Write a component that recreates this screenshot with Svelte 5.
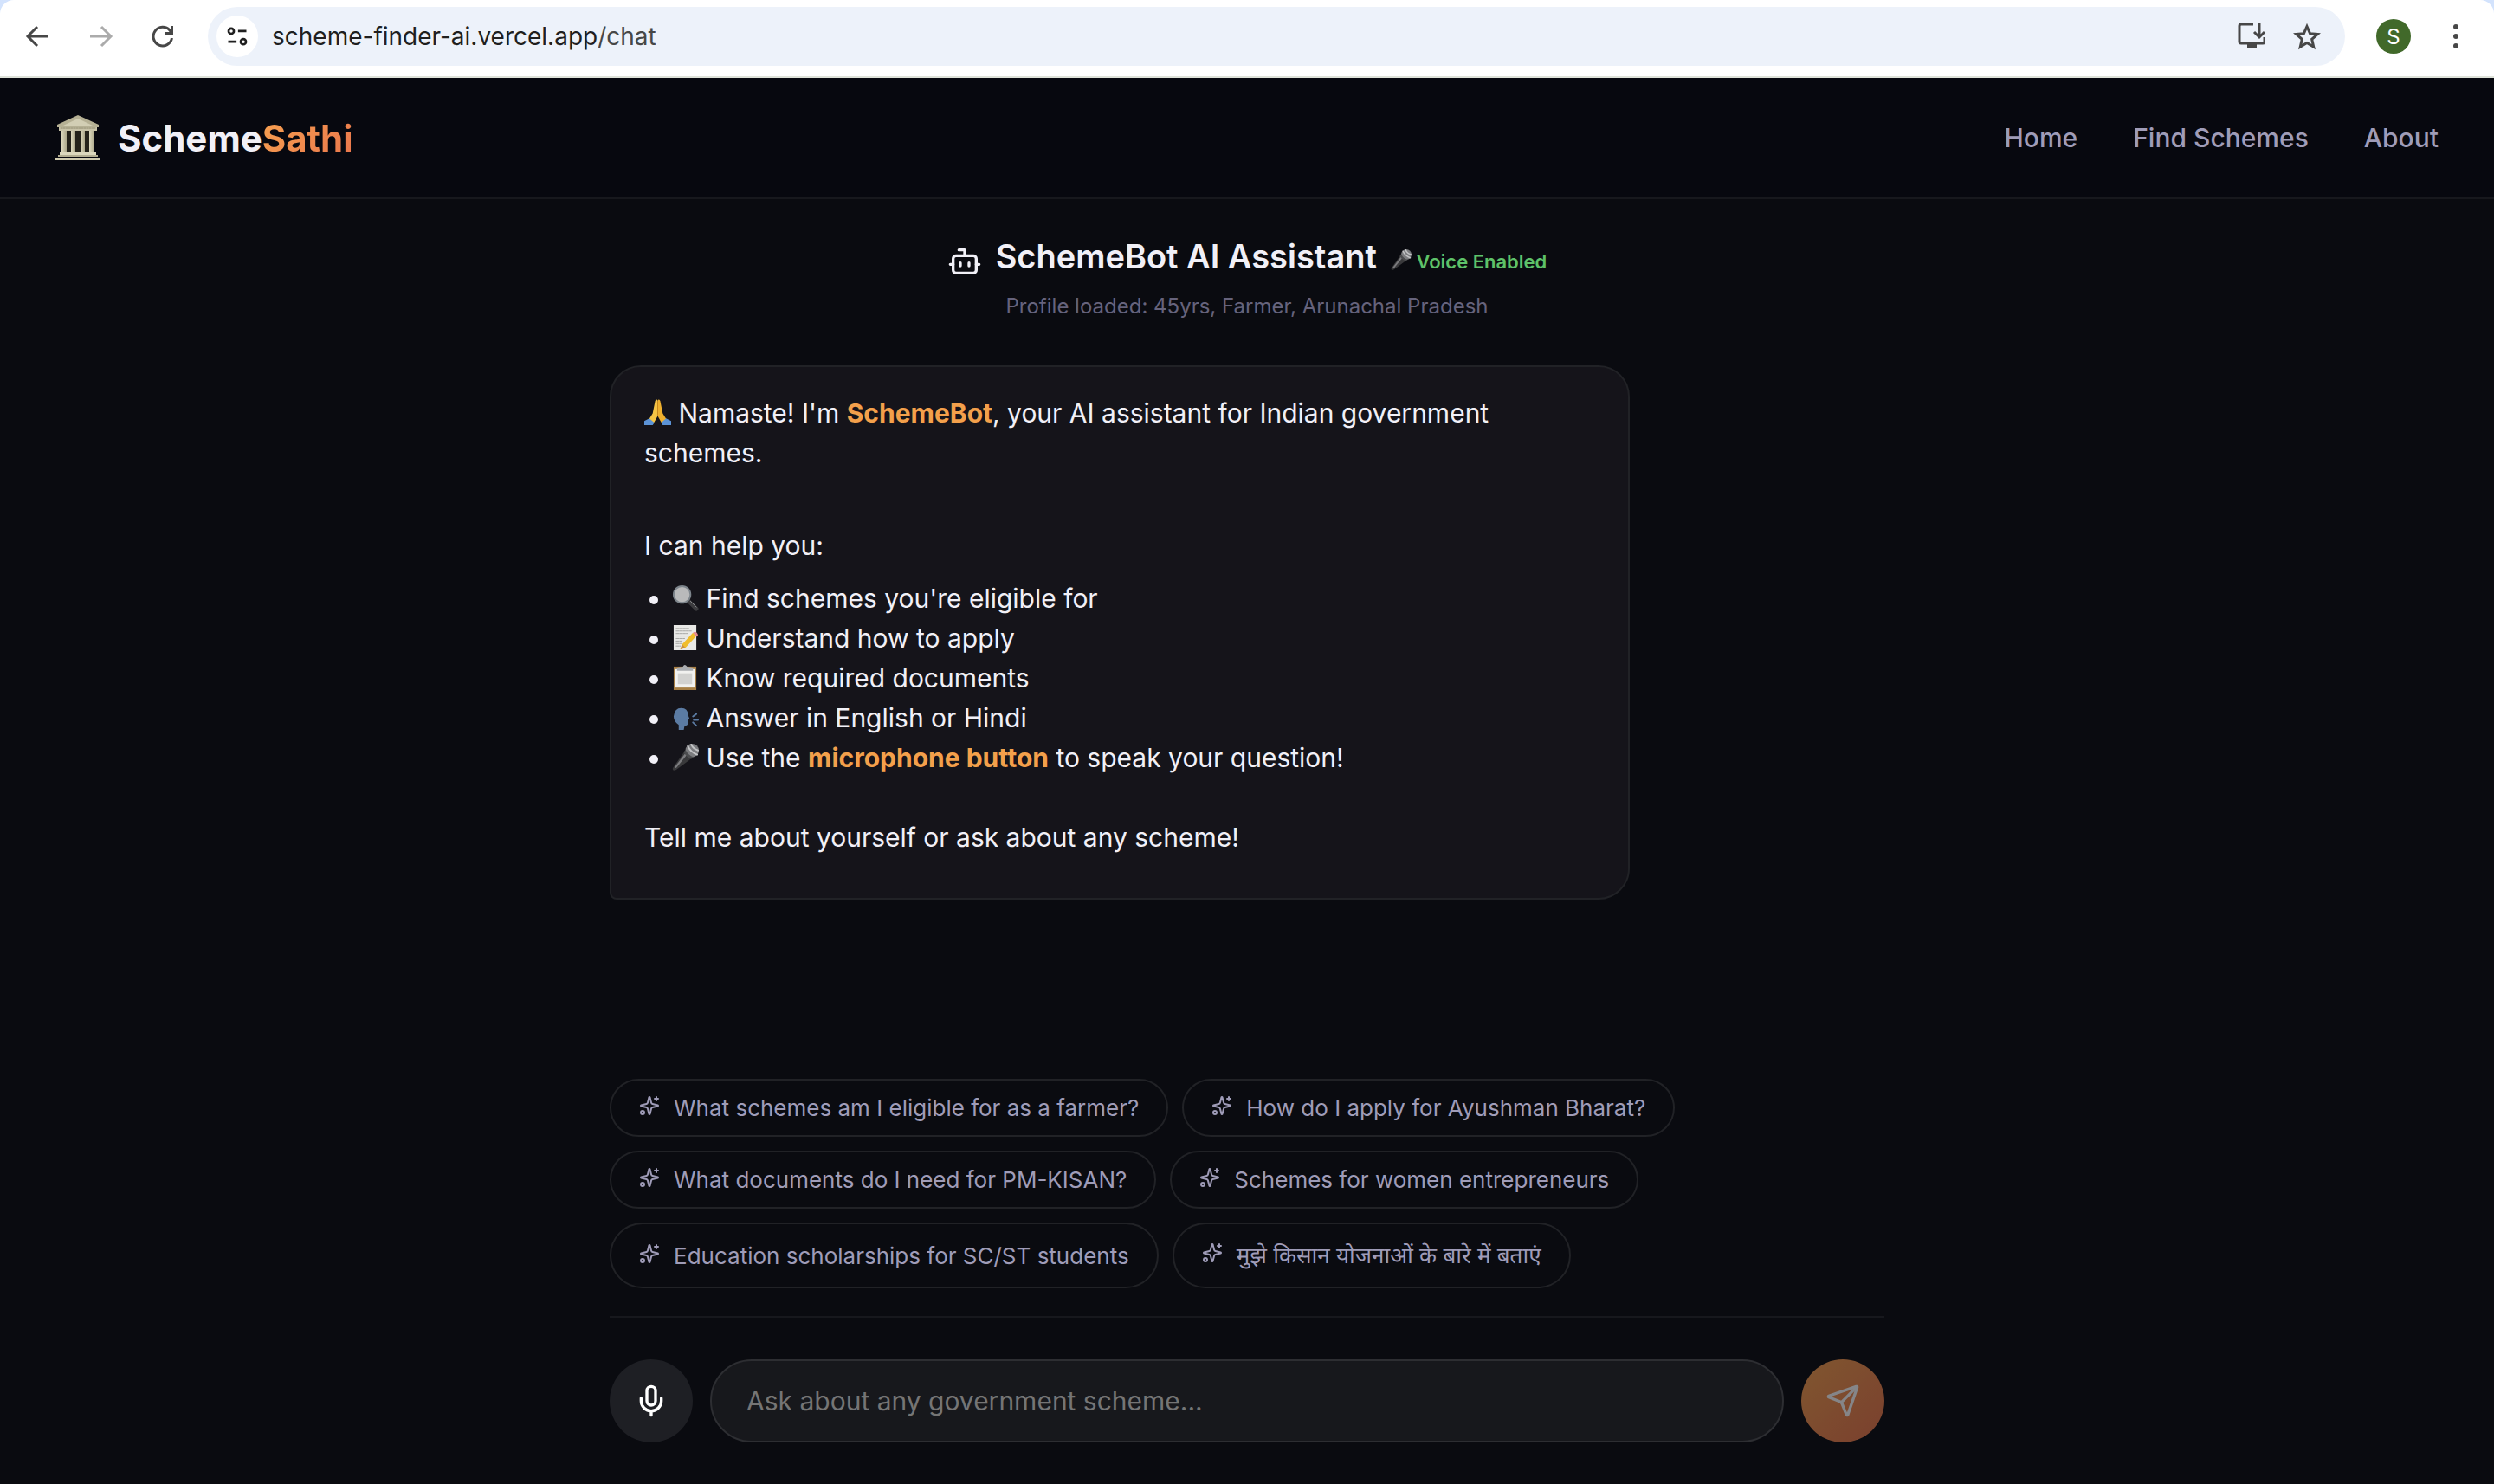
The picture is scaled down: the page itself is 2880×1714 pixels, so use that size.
<script>
    let question = '';

    const links = ['Home', 'Find Schemes', 'About'];

    const suggestions = [
        { text: 'What schemes am I eligible for as a farmer?' },
        { text: 'How do I apply for Ayushman Bharat?' },
        { text: 'What documents do I need for PM-KISAN?' },
        { text: 'Schemes for women entrepreneurs' },
        { text: 'Education scholarships for SC/ST students' },
        { text: 'मुझे किसान योजनाओं के बारे में बताएं', lang: 'hi' }
    ];

    function handleSubmit() {
        question = '';
    }
</script>

{#snippet microphone()}
    <svg class="emoji" viewBox="0 0 32 32" aria-hidden="true">
        <path d="M1 29 L15 9 L24 17 L5 31 Q0 33 1 29Z" fill="#39393b" />
        <path d="M3 28 L16 11 L18 13 L5 29Z" fill="#7c7c7f" />
        <circle cx="24" cy="8" r="8" fill="#7b7c7f" />
        <path d="M16 7 Q19 14 26 16 L23 18 Q17 16 14 10Z" fill="#4b4c4e" />
        <path d="M19 3 Q22 10 30 13 M23 1 Q25 6 31 8" stroke="#c3c4c6" stroke-width="2" />
    </svg>
{/snippet}

<div class="browser">
    <div class="chrome">
        <div class="toolbar">
            <div class="history">
                <button class="tool" aria-label="Back">
                    <svg viewBox="0 0 32 32"><path d="M28 16H5M15 5L4 16l11 11" /></svg>
                </button>
                <button class="tool dim" aria-label="Forward">
                    <svg viewBox="0 0 32 32"><path d="M4 16h23M17 5l11 11-11 11" /></svg>
                </button>
                <button class="tool" aria-label="Reload">
                    <svg viewBox="0 0 32 32"><path d="M26.500 18A10.800 10.800 0 1 1 24 9l2 3M26.500 4v8.500h-8.500" /></svg>
                </button>
            </div>
            <div class="omnibox">
                <div class="address">
                    <button class="site" aria-label="Site settings">
                        <svg viewBox="0 0 32 32"><circle cx="8" cy="9" r="3.500" /><path d="M17 9h11M4 23h11" /><circle cx="24" cy="23" r="3.500" /></svg>
                    </button>
                    <span class="url">scheme-finder-ai.vercel.app<span class="path">/chat</span></span>
                </div>
                <button class="tool" aria-label="Install app">
                    <svg viewBox="0 0 32 32"><path d="M18 2H4q-2 0-2 2v18q0 2 2 2h25q2 0 2-2v-5" /><path d="M25 1v15M19 11l6 6 6-6" /><path d="M11 25h11v5H11z" class="solid" /></svg>
                </button>
                <button class="tool" aria-label="Bookmark">
                    <svg viewBox="0 0 32 32"><path d="M16 4.500l3.500 8.200 8.900.8-6.700 5.900 2 8.700-7.700-4.600-7.700 4.600 2-8.700-6.700-5.900 8.900-.8z" /></svg>
                </button>
            </div>
            <button class="avatar">S</button>
            <button class="tool" aria-label="Menu">
                <svg viewBox="0 0 32 32" class="solid"><circle cx="16" cy="5" r="3" /><circle cx="16" cy="16" r="3" /><circle cx="16" cy="27" r="3" /></svg>
            </button>
        </div>
    </div>

    <nav>
        <a class="brand" href="/">
            <svg class="temple" viewBox="0 0 52 52" aria-hidden="true">
                <defs>
                    <linearGradient id="stone" x1="0" y1="0" x2="1" y2="0">
                        <stop offset="0" stop-color="#dedabf" />
                        <stop offset="1" stop-color="#aaa588" />
                    </linearGradient>
                </defs>
                <path d="M8 18h36v26H8z" fill="#24221a" />
                <path d="M26 0l24 11v3H2v-3z" fill="#b5b094" />
                <path d="M26 4l17 8H9z" fill="#d2ceb4" />
                <path d="M4 14h44v4H4z" fill="#c8c3a8" />
                <path d="M6 15h40" stroke="#8d886c" stroke-width="1" stroke-dasharray="2 1" />
                <g fill="url(#stone)">
                    <path d="M7 18h6v26H7z" />
                    <path d="M18 18h5v26h-5z" />
                    <path d="M29 18h5v26h-5z" />
                    <path d="M39 18h6v26h-6z" />
                </g>
                <path d="M5 43h42v3H5z" fill="#dbd7bd" />
                <path d="M3 46h46v2H3z" fill="#b3ae92" />
                <path d="M0 49h52v3H0z" fill="#cfcaae" />
            </svg>
            <span>Scheme<span class="accent">Sathi</span></span>
        </a>
        <div class="links">
            {#each links as link}
                <a href="/{link.toLowerCase().replace(' ', '-')}">{link}</a>
            {/each}
        </div>
    </nav>

    <main>
        <header>
            <h1>
                <svg class="bot" viewBox="0 0 24 24"><path d="M12 8V4H8" /><rect width="16" height="12" x="4" y="8" rx="2" /><path d="M2 14h2M20 14h2M15 13v2M9 13v2" /></svg>
                <span>SchemeBot AI Assistant</span>
                <span class="voice">{@render microphone()} Voice Enabled</span>
            </h1>
            <p>Profile loaded: 45yrs, Farmer, Arunachal Pradesh</p>
        </header>

        <div class="messages">
            <div class="bubble">
                <p>
                    <svg class="emoji" viewBox="0 0 32 32" aria-hidden="true">
                        <path d="M13 2q2-3 3 0v18l-5 9-6-4 5-8z" fill="#f5c445" />
                        <path d="M19 2q-2-3-3 0v18l5 9 6-4-5-8z" fill="#eeb02f" />
                        <path d="M16 3v17" stroke="#c98a1d" stroke-width="1" />
                        <path d="M0 26l6-3 6 5-2 3H0zM32 26l-6-3-6 5 2 3h10z" fill="#5c93d6" />
                    </svg>
                    Namaste! I'm <strong>SchemeBot</strong>, your AI assistant for Indian government schemes.
                </p>
                <br />
                <p>I can help you:</p>
                <ul>
                    <li>
                        <svg class="emoji" viewBox="0 0 32 32" aria-hidden="true">
                            <path d="M20 20l9 9" stroke="#3c3c3f" stroke-width="5" stroke-linecap="round" />
                            <path d="M22 20l7 7" stroke="#8a8b8d" stroke-width="1" />
                            <circle cx="12" cy="12" r="10" fill="#b9babb" stroke="#7d858c" stroke-width="2" />
                        </svg>
                        Find schemes you're eligible for
                    </li>
                    <li>
                        <svg class="emoji" viewBox="0 0 32 32" aria-hidden="true">
                            <path d="M2 1h27v30H2z" fill="#e9e9e7" />
                            <path d="M5 5h15M5 8h18M5 11h14M5 14h17M5 17h10M5 20h8M5 23h6M5 26h5" stroke="#a5a5a3" stroke-width="1" stroke-dasharray="3 1" />
                            <path d="M12 24L25 10l4 4-13 14-6 2z" fill="#f0bd2c" />
                            <path d="M12 24l4 4-6 2z" fill="#c98e46" />
                            <path d="M25 10l2-1q3 0 4 4l-2 2z" fill="#e58a92" />
                        </svg>
                        Understand how to apply
                    </li>
                    <li>
                        <svg class="emoji" viewBox="0 0 32 32" aria-hidden="true">
                            <path d="M2 3h27v28H2z" fill="#a77f45" />
                            <path d="M4 6h23v22H4z" fill="#f1f1ef" />
                            <path d="M7 11h17v13H7z" fill="#d2d2d0" />
                            <path d="M6 4l7-1q2-4 5 0l7 1v4H6z" fill="#a9acb0" />
                        </svg>
                        Know required documents
                    </li>
                    <li>
                        <svg class="emoji" viewBox="0 0 32 32" aria-hidden="true">
                            <path d="M8 31v-6Q2 21 2 15 3 5 11 5q8 0 8 8l2 5-2 1v4q0 3-4 3l-1 5z" fill="#5b7ba3" />
                            <path d="M25 15l4-3M26 19h5M25 22l4 4" stroke="#5b7ba3" stroke-width="2" stroke-linecap="round" />
                        </svg>
                        Answer in English or Hindi
                    </li>
                    <li>{@render microphone()} Use the <strong>microphone button</strong> to speak your question!</li>
                </ul>
                <br />
                <p>Tell me about yourself or ask about any scheme!</p>
            </div>
        </div>

        <div class="suggestions">
            {#each suggestions as suggestion}
                <button lang={suggestion.lang ?? 'en'} on:click={() => (question = suggestion.text)}>
                    <svg viewBox="0 0 24 24"><path d="M9.937 15.500A2 2 0 0 0 8.500 14.063l-6.135-1.582a.5.5 0 0 1 0-.962L8.500 9.936A2 2 0 0 0 9.937 8.500l1.582-6.135a.5.5 0 0 1 .963 0L14.063 8.500A2 2 0 0 0 15.500 9.937l6.135 1.581a.5.5 0 0 1 0 .964L15.500 14.063a2 2 0 0 0-1.437 1.437l-1.582 6.135a.5.5 0 0 1-.963 0z" /><path d="M20 2v4M22 4h-4" /><circle cx="4" cy="20" r="2" /></svg>{suggestion.text}
                </button>
            {/each}
        </div>

        <form on:submit|preventDefault={handleSubmit}>
            <button class="round mic" type="button" aria-label="Speak">
                <svg viewBox="0 0 24 24"><path d="M12 19v3M19 10v2a7 7 0 0 1-14 0v-2" /><rect x="9" y="2" width="6" height="13" rx="3" /></svg>
            </button>
            <input type="text" bind:value={question} placeholder="Ask about any government scheme..." aria-label="Question" />
            <button class="round send" type="submit" aria-label="Send" disabled={!question}>
                <svg viewBox="0 0 24 24"><path d="M14.536 21.686a.5.5 0 0 0 .937-.024l6.500-19a.496.496 0 0 0-.635-.635l-19 6.500a.5.5 0 0 0-.024.937l7.930 3.180a2 2 0 0 1 1.112 1.110z" /><path d="m21.854 2.147-10.940 10.939" /></svg>
            </button>
        </form>
    </main>
</div>

<style>
    :global(body) {
        background: #0a0b10;
    }

    .browser {
        min-height: 100vh;
        display: flex;
        flex-direction: column;
        font-family: Inter, "Noto Sans", sans-serif;
        color: #f1f0f7;
    }

    button {
        border: none;
        background: none;
        padding: 0;
        color: inherit;
        font-family: inherit;
        cursor: pointer;
    }

    a {
        color: inherit;
        text-decoration: none;
    }

    svg {
        fill: none;
        stroke: currentColor;
        stroke-width: 2;
        stroke-linecap: round;
        stroke-linejoin: round;
    }

    .emoji, .temple {
        stroke: none;
    }

    /* Browser toolbar */
    .chrome {
        background: #d3e3fd;
    }

    .toolbar {
        display: flex;
        align-items: center;
        gap: 36px;
        padding: 8px 28px 12px;
        background: #ffffff;
        border-bottom: 2px solid #dfe3da;
        border-radius: 16px 16px 0 0;
        color: #474747;
    }

    .history {
        display: flex;
        gap: 40px;
    }

    .tool, .tool svg {
        display: block;
        width: 32px;
        height: 32px;
    }

    .tool svg {
        stroke-width: 3;
        stroke-linecap: butt;
        stroke-linejoin: miter;
    }

    .tool .solid, .tool svg.solid {
        fill: currentColor;
        stroke: none;
    }

    .dim {
        color: #ababab;
    }

    .omnibox {
        flex: 1;
        display: flex;
        align-items: center;
        gap: 32px;
        height: 68px;
        box-sizing: border-box;
        padding: 0 28px 0 10px;
        border-radius: 34px;
        background: #edf2fa;
    }

    .address {
        flex: 1;
        display: flex;
        align-items: center;
        gap: 16px;
    }

    .site {
        display: flex;
        align-items: center;
        justify-content: center;
        width: 48px;
        height: 48px;
        border-radius: 50%;
        background: #ffffff;
        color: #1f1f1f;
    }

    .site svg {
        width: 28px;
        height: 28px;
        stroke-width: 3;
        stroke-linecap: butt;
    }

    .url {
        font-size: 28px;
        line-height: 36px;
        color: #1f1f1f;
    }

    .path {
        color: #474747;
    }

    .avatar {
        width: 40px;
        height: 40px;
        border-radius: 50%;
        background: #41692a;
        color: #ffffff;
        font-size: 24px;
    }

    /* Site navigation */
    nav {
        display: flex;
        align-items: center;
        justify-content: space-between;
        height: 138px;
        padding: 0 64px;
        background: #07080f;
        border-bottom: 2px solid #17181d;
    }

    .brand {
        display: flex;
        align-items: center;
        gap: 20px;
        font-size: 42px;
        font-weight: 700;
    }

    .temple {
        width: 52px;
        height: 52px;
    }

    .accent {
        background: linear-gradient(135deg, #f6a150, #ea754c);
        background-clip: text;
        color: transparent;
    }

    .links {
        display: flex;
        gap: 64px;
        font-size: 30px;
        font-weight: 500;
        color: #9f9cb8;
    }

    /* Chat column */
    main {
        flex: 1;
        display: flex;
        flex-direction: column;
        width: 100%;
        max-width: 1600px;
        box-sizing: border-box;
        margin: 0 auto;
        padding: 40px 64px 48px;
    }

    header {
        text-align: center;
    }

    h1 {
        display: flex;
        align-items: baseline;
        justify-content: center;
        gap: 16px;
        margin: 0;
        font-size: 38px;
        line-height: 52px;
        font-weight: 600;
    }

    .bot {
        width: 40px;
        height: 40px;
        align-self: flex-end;
    }

    .voice {
        font-size: 22px;
        line-height: 32px;
        color: #5ec269;
    }

    .voice .emoji {
        width: 24px;
        height: 24px;
        vertical-align: -2px;
    }

    header p {
        margin: 12px 0 0;
        font-size: 24px;
        line-height: 40px;
        color: #66637c;
    }

    .messages {
        flex: 1;
        padding: 48px 0;
    }

    .bubble {
        max-width: 80%;
        box-sizing: border-box;
        padding: 30px 38px 32px;
        border: 2px solid #212226;
        border-radius: 36px 36px 36px 8px;
        background: #15141a;
        font-size: 30px;
        line-height: 46px;
    }

    .bubble p {
        margin: 0 0 15px;
    }

    .bubble ul {
        margin: 0;
        padding-left: 32px;
    }

    .bubble .emoji {
        width: 31px;
        height: 31px;
        vertical-align: -4px;
    }

    strong {
        font-weight: 700;
        color: #f3a04b;
    }

    .suggestions {
        display: flex;
        flex-wrap: wrap;
        gap: 16px;
        padding-bottom: 32px;
        border-bottom: 2px solid #17181d;
    }

    .suggestions button {
        padding: 14px 32px;
        border: 2px solid #212226;
        border-radius: 40px;
        color: #9f9cb8;
        font-size: 26px;
        line-height: 35px;
    }

    .suggestions button:lang(hi) {
        line-height: 44px;
    }

    .suggestions svg {
        width: 24px;
        height: 24px;
        margin-right: 16px;
    }

    form {
        display: flex;
        gap: 20px;
        padding-top: 48px;
    }

    .round {
        display: flex;
        align-items: center;
        justify-content: center;
        width: 96px;
        height: 96px;
        border-radius: 50%;
    }

    .round svg {
        width: 40px;
        height: 40px;
    }

    .mic {
        background: #1e1f24;
        color: #ffffff;
    }

    .send {
        background: linear-gradient(135deg, #f6a150, #ea754c);
        color: #ffffff;
    }

    .send:disabled {
        opacity: 0.5;
    }

    input {
        flex: 1;
        min-width: 0;
        box-sizing: border-box;
        padding: 0 40px;
        border: 2px solid #2d2e32;
        border-radius: 48px;
        background: #17181c;
        color: inherit;
        font-family: inherit;
        font-size: 30px;
    }

    input::placeholder {
        color: #757575;
    }
</style>
